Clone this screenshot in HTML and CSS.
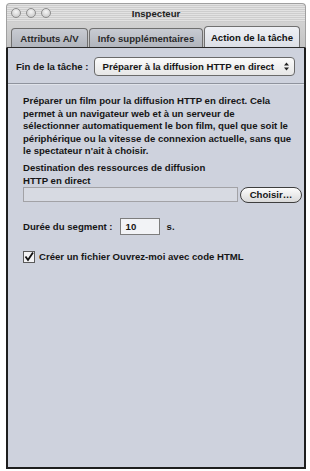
FILE: index.html
```html
<!DOCTYPE html>
<html lang="fr">
<head>
<meta charset="utf-8">
<link rel="stylesheet" href="styles.css">
</head>
<body>
<div class="window">
  <div class="titlebar">
    <div class="lights"><span class="light"></span><span class="light"></span><span class="light"></span></div>
    <div class="title">Inspecteur</div>
  </div>
  <div class="tabs">
    <div class="tab t1">Attributs A/V</div>
    <div class="tab t2">Info supplémentaires</div>
    <div class="tab t3 active">Action de la tâche</div>
  </div>
  <div class="panel">
    <div class="row-top">
      <span class="lbl">Fin de la tâche :</span>
      <div class="popup"><span>Préparer à la diffusion HTTP en direct</span><span class="arrows">
        <svg width="7" height="11" viewBox="0 0 7 11"><path d="M1 4.5 L3.5 1.5 L6 4.5 Z M1 6.5 L3.5 9.5 L6 6.5 Z" fill="#222"/></svg></span></div>
    </div>
    <div class="sep"></div>
    <div class="body">
      <p class="desc">Préparer un film pour la diffusion HTTP en direct. Cela<br>permet à un navigateur web et à un serveur de<br>sélectionner automatiquement le bon film, quel que soit le<br>périphérique ou la vitesse de connexion actuelle, sans que<br>le spectateur n'ait à choisir.</p>
      <p class="dest">Destination des ressources de diffusion<br>HTTP en direct</p>
      <div class="pathrow">
        <div class="pathfield"></div>
        <div class="btn">Choisir…</div>
      </div>
      <div class="segrow">
        <span>Durée du segment :</span>
        <div class="numfield">10</div>
        <span>s.</span>
      </div>
      <div class="checkrow">
        <span class="check"><svg width="12" height="12" viewBox="0 0 12 12"><rect x="0.5" y="0.5" width="11" height="11" fill="#f2f2f4" stroke="#5a5a5a"/><path d="M2.5 5.5 L5 9 L10 1.5" fill="none" stroke="#111" stroke-width="1.8"/></svg></span>
        <span>Créer un fichier Ouvrez-moi avec code HTML</span>
      </div>
    </div>
  </div>
</div>
</body>
</html>
```
FILE: styles.css
```css
html, body { margin: 0; padding: 0; background: #ffffff; }
body { width: 310px; height: 471px; font-family: "Liberation Sans", Arial, sans-serif; font-weight: bold; font-size: 9.6px; color: #161616; }
.window { margin: 3px 4px 0 6px; width: 300px; height: 466px; display: flex; flex-direction: column; box-sizing: border-box; }
.titlebar { height: 19px; position: relative; display: flex; align-items: center; justify-content: center; box-sizing: border-box;
  background: repeating-linear-gradient(to bottom, #e2e2e2 0, #e2e2e2 1px, #cdcdcd 1px, #cdcdcd 2px);
  border: 1px solid #a0a0a0; border-bottom: none; border-radius: 4px 4px 0 0; }
.lights { position: absolute; left: 4px; top: 4px; display: flex; gap: 5px; }
.light { width: 8px; height: 8px; border-radius: 50%; border: 1px solid #8c8c8c; background: radial-gradient(circle at 50% 35%, #f6f6f6, #c0c0c0); }
.title { color: #222; }
.tabs { display: flex; align-items: flex-end; height: 26px; box-sizing: border-box; padding-left: 4px;
  border-left: 1px solid #a0a0a0; border-right: 1px solid #a0a0a0;
  background: linear-gradient(#d2d2d2, #c4c4c4); border-bottom: 1px solid #2a2a2a; }
.tab { height: 19px; display: flex; align-items: center; justify-content: center; box-sizing: border-box;
  border: 1px solid #707070; border-bottom: none; border-radius: 4px 4px 0 0; background: linear-gradient(#c8cbd2, #b1b5bd); color: #2a2a2a; margin-right: 1px; }
.t1 { width: 77px; }
.t2 { width: 114px; }
.t3 { width: 96px; }
.tab.active { height: 21px; background: linear-gradient(#eff1f5, #dcdfe6); color: #111; }
.panel { flex: 1; background: #ced2dd; border-left: 2px solid #1e1e1e; border-right: 2px solid #1e1e1e; border-bottom: 2px solid #1e1e1e; display: flex; flex-direction: column; }
.row-top { display: flex; align-items: center; gap: 5px; padding: 9px 8px 0 8px; }
.lbl { white-space: nowrap; }
.popup { width: 201px; height: 19px; box-sizing: border-box; border: 1px solid #6a6a6a; border-radius: 4px; background: linear-gradient(#fbfbfb, #e6e6e6);
  display: flex; align-items: center; justify-content: space-between; padding: 0 4px 0 8px; white-space: nowrap; }
.arrows { display: flex; }
.sep { height: 1px; background: #8f939d; margin-top: 7px; border-bottom: 1px solid #e0e3ea; }
.body { padding: 0 0 0 15px; }
.desc { margin: 10px 0 0 0; line-height: 12.6px; width: 285px; white-space: nowrap; }
.dest { margin: 3px 0 0 0; line-height: 13px; }
.pathrow { display: flex; align-items: center; gap: 2px; margin-top: 0; width: 279px; }
.pathfield { flex: 1; height: 15px; border: 1px solid #a2a2a6; background: #d7dae2; box-sizing: border-box; }
.btn { width: 62px; height: 16px; box-sizing: border-box; border: 1px solid #3e3e3e; border-radius: 8px; background: linear-gradient(#fdfdfd, #dadada);
  display: flex; align-items: center; justify-content: center; }
.segrow { display: flex; align-items: center; margin-top: 15px; }
.numfield { width: 40px; height: 17px; box-sizing: border-box; border: 1px solid #7d7d7d; background: #f2f3f6; padding-left: 5px; display: flex; align-items: center; margin: 0 7px 0 7px; }
.checkrow { display: flex; align-items: center; gap: 4px; margin-top: 16px; }
.check { display: flex; }
```
